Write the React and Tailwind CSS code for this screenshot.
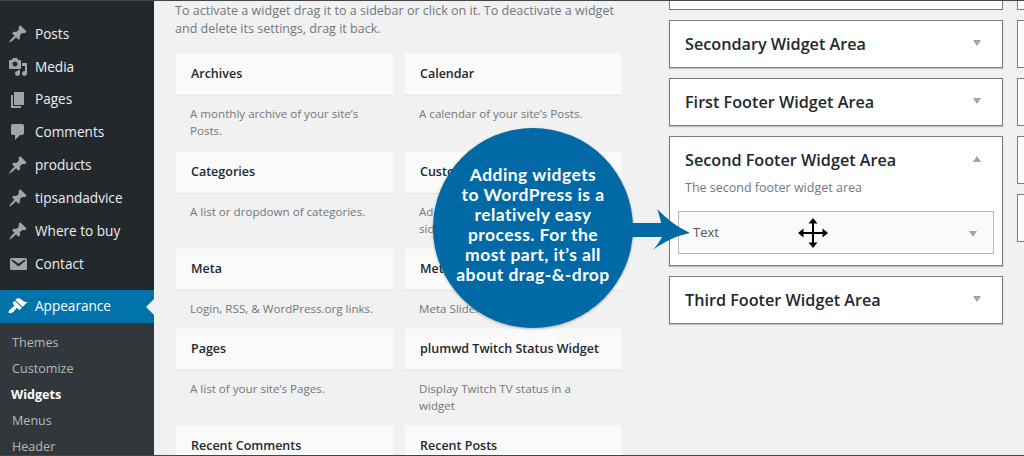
import * as React from 'react';

const PIN = 'M10.44 3.02l1.82-1.82 6.36 6.35-1.83 1.82c-1.05-.68-2.48-.57-3.41.36l-.75.75c-.92.93-1.04 2.35-.35 3.41l-1.83 1.82-2.41-2.41-2.8 2.79c-.42.42-3.38 2.71-3.8 2.29s1.86-3.39 2.28-3.81l2.79-2.79L4.1 9.36l1.83-1.82c1.05.69 2.48.57 3.4-.36l.75-.75c.93-.92 1.05-2.35.36-3.41z';
const MEDIA = 'M13 11V4c0-.55-.45-1-1-1h-1.67L9 1H5L3.67 3H2c-.55 0-1 .45-1 1v7c0 .55.45 1 1 1h10c.55 0 1-.45 1-1zM7 4.5c1.38 0 2.5 1.12 2.5 2.5S8.38 9.5 7 9.5 4.5 8.38 4.5 7 5.62 4.5 7 4.5zM14 6h5v10.5c0 1.38-1.12 2.5-2.5 2.5S14 17.88 14 16.5s1.12-2.5 2.5-2.5c.17 0 .34.02.5.05V9h-3V6zm-4 8.05V13h2v3.5c0 1.38-1.12 2.5-2.5 2.5S7 17.88 7 16.5 8.12 14 9.5 14c.17 0 .34.02.5.05z';
const PAGE = 'M6 15V2h10v13H6zm-1 1h8v2H3V5h2v11z';
const COMMENT = 'M5 2h9c1.1 0 2 .9 2 2v7c0 1.1-.9 2-2 2h-2l-5 5v-5H5c-1.1 0-2-.9-2-2V4c0-1.1.9-2 2-2z';
const MAIL = 'M3.87 4h13.25C18.37 4 19 4.59 19 5.79v8.42c0 1.19-.63 1.79-1.88 1.79H3.87c-1.25 0-1.88-.6-1.88-1.79V5.79c0-1.2.63-1.79 1.88-1.79zm6.62 8.6l6.74-5.53c.24-.2.43-.66.13-1.07-.29-.41-.82-.42-1.17-.17l-5.7 3.86L4.8 5.83c-.35-.25-.88-.24-1.17.17-.3.41-.11.87.13 1.07z';
const BRUSH = 'M14.48 11.06L7.41 3.99l1.5-1.5c.5-.56 2.3-.47 3.51.32 1.21.8 1.43 1.28 2.91 2.1 1.18.64 2.45 1.26 4.45.85zm-.71.71L6.7 4.7 4.93 6.47c-.39.39-.39 1.02 0 1.41l1.06 1.06c.39.39.39 1.03 0 1.42-.6.6-1.43 1.11-2.21 1.69-.35.26-.7.53-1.01.84C1.43 13.26 0 16 1 17s3.74-.43 4.7-1.39c.31-.31.58-.66.84-1.01.58-.78 1.09-1.61 1.69-2.21.39-.39 1.03-.39 1.42 0l1.06 1.06c.39.39 1.02.39 1.41 0z';

const menu = [
  ['Posts', PIN],
  ['Media', MEDIA],
  ['Pages', PAGE],
  ['Comments', COMMENT],
  ['products', PIN],
  ['tipsandadvice', PIN],
  ['Where to buy', PIN],
  ['Contact', MAIL],
];

function Icon({ d, className }) {
  return (
    <svg viewBox="0 0 20 20" className={className} fill="currentColor">
      <path d={d} />
    </svg>
  );
}

function Sidebar() {
  return (
    <div className="w-[154px] h-full shrink-0 bg-[#23282d] pt-[17.5px] overflow-hidden">
      {menu.map(([label, d]) => (
        <div key={label} className="h-[32.85px] flex items-center pl-[8px] text-[13.6px] text-[#eeeeee]">
          <Icon d={d} className="w-[20px] h-[20px] text-[#a0a5aa] mr-[7px] shrink-0" />
          {label}
        </div>
      ))}
      <div className="mt-[9.7px] h-[33px] bg-[#0073aa] flex items-center pl-[8px] text-[13.6px] text-white relative">
        <Icon d={BRUSH} className="w-[20px] h-[20px] text-white mr-[7px] shrink-0" />
        Appearance
        <div className="absolute right-0 top-[9px] border-y-[8px] border-r-[8px] border-y-transparent border-r-[#f1f1f1]" />
      </div>
      <div className="bg-[#32373c] h-full pt-[8px] text-[12.6px] text-[#b4b9be]">
        <div className="h-[26px] flex items-center pl-[12px]">Themes</div>
        <div className="h-[26px] flex items-center pl-[12px]">Customize</div>
        <div className="h-[26px] flex items-center pl-[11px] font-bold text-white">Widgets</div>
        <div className="h-[26px] flex items-center pl-[12px]">Menus</div>
        <div className="h-[26px] flex items-center pl-[12px]">Header</div>
      </div>
    </div>
  );
}

function Widget({ title, desc, height }) {
  return (
    <div className={height}>
      <div className="h-[42px] bg-[#fafafa] border border-[#f4f4f4] shadow-[0_1px_1px_rgba(0,0,0,0.04)] flex items-center pl-[15px] text-[12.5px] font-semibold text-[#23282d]">
        {title}
      </div>
      <div className="px-[15px] pt-[10px] text-[11.6px] leading-[17px] text-[#72777c]">{desc}</div>
    </div>
  );
}

function Arrow({ open, className }) {
  return (
    <div className={`w-0 h-0 border-x-[4.5px] border-x-transparent ${open ? 'border-b-[6px] border-b-[#a0a5aa]' : 'border-t-[6px] border-t-[#a0a5aa]'} ${className || ''}`} />
  );
}

function Area({ title, open, heightClass, children }) {
  return (
    <div className={`${heightClass} bg-white border border-[#7d7d7d] shadow-[0_1px_1px_rgba(0,0,0,0.2)] shrink-0`}>
      <div className="h-[46px] flex items-center justify-between pl-[15px] pr-[21px]">
        <span className="text-[16.2px] font-semibold text-[#23282d]">{title}</span>
        <Arrow open={open} className="mb-[3px]" />
      </div>
      {children}
    </div>
  );
}

export default function App() {
  return (
    <div className="relative w-[1024px] h-[456px] overflow-hidden flex bg-[#f1f1f1] font-['Open_Sans',sans-serif]">
      <Sidebar />
      <div className="w-[515px] shrink-0 pl-[21px] -mt-[1px]">
        <p className="text-[12.55px] leading-[18px] text-[#72777c] pt-[3px] whitespace-nowrap">
          To activate a widget drag it to a sidebar or click on it. To deactivate a widget
          <br />
          and delete its settings, drag it back.
        </p>
        <div className="mt-[15px] grid grid-cols-[219px_218px] gap-x-[10px]">
          <Widget height="h-[98px]" title="Archives" desc="A monthly archive of your site’s Posts." />
          <Widget height="h-[98px]" title="Calendar" desc="A calendar of your site’s Posts." />
          <Widget height="h-[97px]" title="Categories" desc="A list or dropdown of categories." />
          <Widget height="h-[97px]" title="Custom Menu" desc="Add a custom menu to your sidebar." />
          <Widget height="h-[80px]" title="Meta" desc="Login, RSS, & WordPress.org links." />
          <Widget height="h-[80px]" title="Meta Slider" desc="Meta Slider" />
          <Widget height="h-[97px]" title="Pages" desc="A list of your site’s Pages." />
          <Widget height="h-[97px]" title="plumwd Twitch Status Widget" desc="Display Twitch TV status in a widget" />
          <Widget title="Recent Comments" desc="" />
          <Widget title="Recent Posts" desc="" />
        </div>
      </div>
      <div className="w-[334px] shrink-0 flex flex-col gap-[10px] -mt-[38px]">
        <div className="h-[48px] bg-white border border-[#7d7d7d] shrink-0" />
        <Area heightClass="h-[48px]" title="Secondary Widget Area" />
        <Area heightClass="h-[48px]" title="First Footer Widget Area" />
        <Area heightClass="h-[130px]" title="Second Footer Widget Area" open>
          <p className="px-[15px] text-[12.5px] text-[#72777c] leading-[18px] -mt-[4px]">The second footer widget area</p>
          <div className="mx-[8px] mt-[14px] h-[43px] bg-[#fafafa] border border-[#b4b9be] flex items-center justify-between pl-[14px] pr-[16px]">
            <span className="text-[13px] text-[#555555]">Text</span>
            <Arrow className="mt-[2px]" />
          </div>
        </Area>
        <Area heightClass="h-[48px]" title="Third Footer Widget Area" />
      </div>
      <div className="ml-[14px] flex-1 flex flex-col gap-[10px] -mt-[38px]">
        <div className="h-[48px] bg-white border border-[#7d7d7d] border-r-0 shrink-0" />
        <div className="h-[48px] bg-white border border-[#7d7d7d] border-r-0 shrink-0" />
        <div className="h-[48px] bg-white border border-[#7d7d7d] border-r-0 shrink-0" />
        <div className="h-[48px] bg-white border border-[#7d7d7d] border-r-0 shrink-0" />
        <div className="h-[48px] bg-white border border-[#7d7d7d] border-r-0 shrink-0" />
      </div>

      {/* callout over the page */}
      <div className="absolute left-[433px] top-[128px] w-[200px] h-[200px] pb-[6px] rounded-full bg-[#0069a6] shadow-[0_1px_3px_rgba(0,0,0,0.25)] flex flex-col items-center justify-center text-white text-[17.5px] leading-[20px] tracking-[0.45px] font-bold font-['Lato',sans-serif] text-center whitespace-nowrap">
        <span>Adding widgets</span>
        <span>to WordPress is a</span>
        <span>relatively easy</span>
        <span>process. For the</span>
        <span>most part, it’s all</span>
        <span>about drag-&-drop</span>
      </div>
      <svg viewBox="0 0 60 46" className="absolute left-[630px] top-[205px] w-[60px] h-[46px]" fill="#0069a6">
        <path d="M0 18H31C30 13 29 8 27 4C36 13 47 22 60 28C46 31 33 37 23 45C27 40 30 36 32 32H0Z" />
      </svg>
      {/* move cursor */}
      <svg viewBox="0 0 30 30" className="absolute left-[798px] top-[218px] w-[30px] h-[30px]" fill="#000000">
        <path d="M14 4h2v22h-2zM4 14h22v2H4z" />
        <path d="M15 0l4.5 5.5h-9zM15 30l-4.5-5.5h9zM0 15l5.5-4.5v9zM30 15l-5.5 4.5v-9z" />
      </svg>
      {/* thin frame of the screenshot */}
      <div className="absolute inset-0 border-y border-y-[#444444] pointer-events-none" />
    </div>
  );
}
